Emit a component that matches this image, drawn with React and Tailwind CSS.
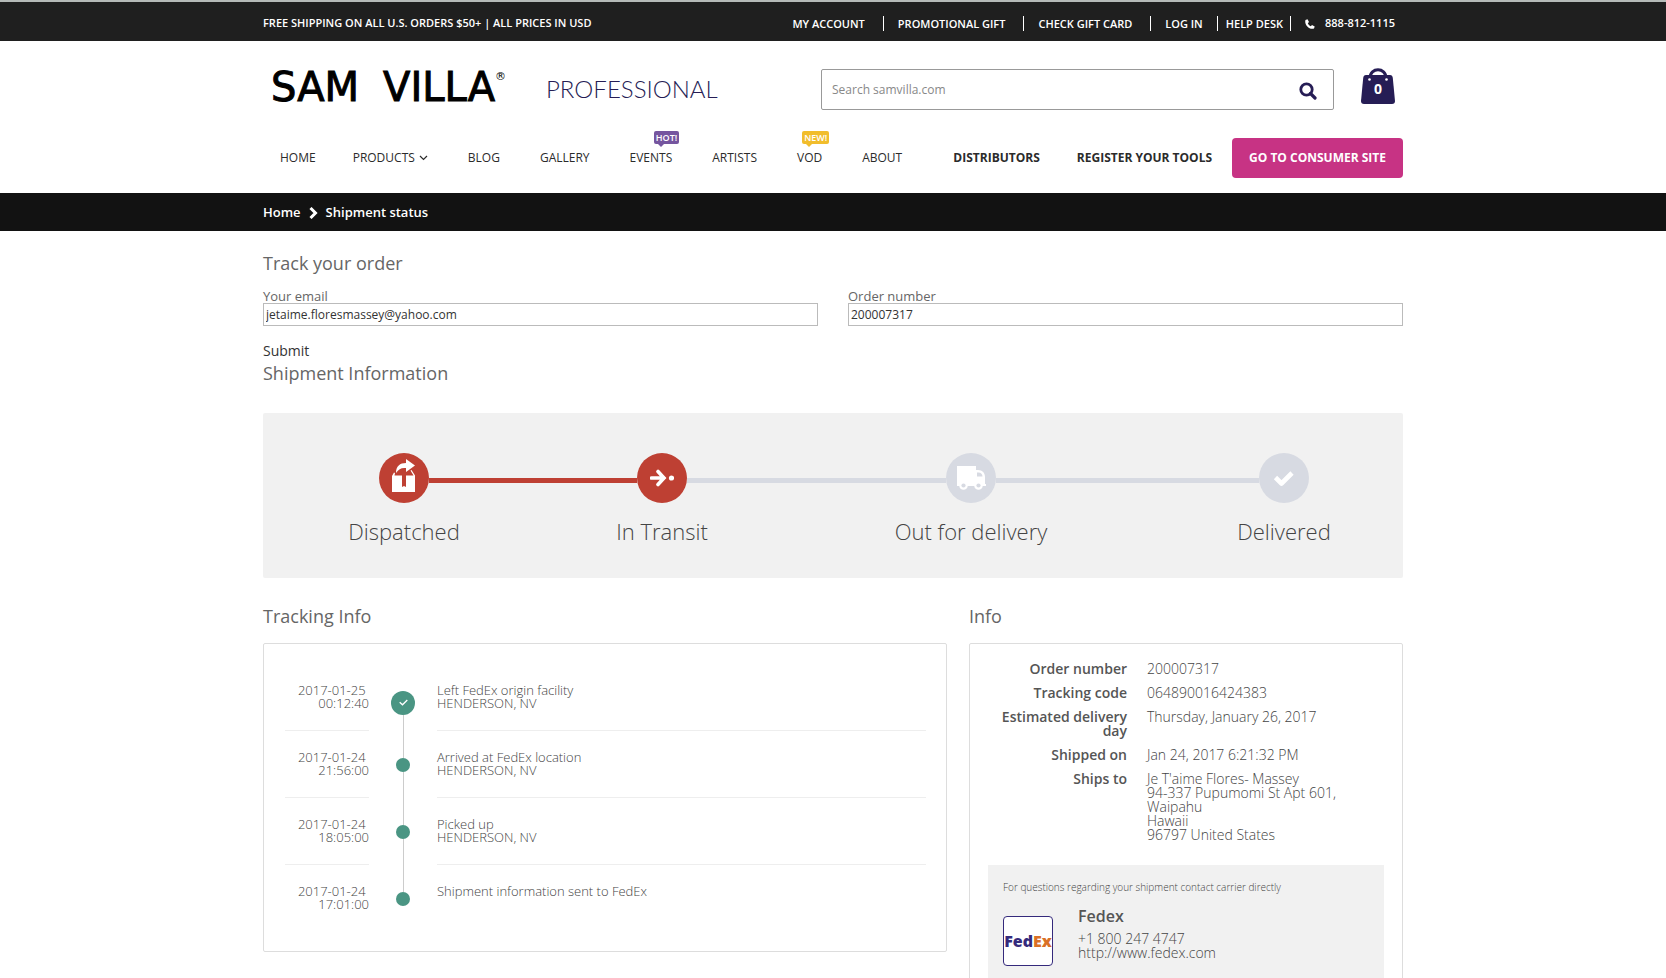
import React, { useState } from "react";

const topLinks = [
  { name: "MY ACCOUNT", style: "pr-[18px]" },
  { name: "PROMOTIONAL GIFT", style: "pl-[14px] pr-[18px] border-l" },
  { name: "CHECK GIFT CARD", style: "pl-[14px] pr-[18px] border-l" },
  { name: "LOG IN", style: "pl-[14px] pr-[14px] border-l" },
  { name: "HELP DESK", style: "pl-2 pr-[7px] border-x" },
];

const navLinks = [
  { name: "HOME" },
  { name: "PRODUCTS", arrow: true },
  { name: "BLOG" },
  { name: "GALLERY" },
  { name: "EVENTS", badge: "HOT!", color: "bg-[#75559f]", tip: "border-t-[#75559f]" },
  { name: "ARTISTS" },
  { name: "VOD", badge: "NEW!", color: "bg-[#f1bd2c]", tip: "border-t-[#f1bd2c]" },
  { name: "ABOUT" },
];

const events = [
  { date: "2017-01-25", time: "00:12:40", title: "Left FedEx origin facility", place: "HENDERSON, NV" },
  { date: "2017-01-24", time: "21:56:00", title: "Arrived at FedEx location", place: "HENDERSON, NV" },
  { date: "2017-01-24", time: "18:05:00", title: "Picked up", place: "HENDERSON, NV" },
  { date: "2017-01-24", time: "17:01:00", title: "Shipment information sent to FedEx", place: "" },
];

const details = [
  { label: "Order number", lines: ["200007317"] },
  { label: "Tracking code", lines: ["064890016424383"] },
  { label: "Estimated delivery day", lines: ["Thursday, January 26, 2017"] },
  { label: "Shipped on", lines: ["Jan 24, 2017 6:21:32 PM"] },
  {
    label: "Ships to",
    lines: ["Je T'aime Flores- Massey", "94-337 Pupumomi St Apt 601, Waipahu", "Hawaii", "96797 United States"],
  },
];

const BoxIcon = () => (
  <svg width="24" height="34" viewBox="0 0 24 34" fill="#fff" className="mb-1">
    <path d="M0 33 V17 L2 13.500 L3 14 L2.500 16.500 H10 V28 L12 27 L14 28 V16.500 H21.500 L18.500 11.500 L19.500 11 L23 16.500 V33 Z" />
    <path d="M4 14 C4 7 8 4 14 4 V0 L23 6.500 L14 13 V9 C9 8.500 7 10 4 14 Z" />
  </svg>
);

const TransitIcon = () => (
  <svg width="24" height="18" viewBox="0 0 24 18" fill="none">
    <path d="M1.500 9 H12 M8 2.500 L14 9 L8 15.500" stroke="#fff" strokeWidth="3.600" strokeLinecap="round" />
    <path d="M8 3 L16 9 L8 15 L11 9 Z" fill="#fff" />
    <circle cx="21.500" cy="9" r="2.600" fill="#fff" />
  </svg>
);

const TruckIcon = () => (
  <svg width="29" height="24" viewBox="0 0 29 24">
    <path d="M0 0 H19 V4 H21 C25.500 4 28 7 28 11 V18 H29 V20 H0 Z" fill="#fff" />
    <path d="M20 6.500 H21.500 C24 6.500 25.500 8.500 25.500 10.500 H20 Z" fill="#d7dae2" />
    <circle cx="6.500" cy="19.500" r="4.300" fill="#fff" />
    <circle cx="6.500" cy="19.500" r="2.100" fill="#d7dae2" />
    <circle cx="21.500" cy="19.500" r="4.300" fill="#fff" />
    <circle cx="21.500" cy="19.500" r="2.100" fill="#d7dae2" />
  </svg>
);

const DoneIcon = () => (
  <svg width="22" height="17" viewBox="0 0 22 17" fill="none">
    <path d="M2.500 7.500 L8.500 13.500 L19 3" stroke="#fff" strokeWidth="4.600" strokeLinejoin="round" />
  </svg>
);

const Step = ({ label, color, children }) => (
  <li className="w-[50px] shrink-0 flex flex-col items-center">
    <span className={`w-[50px] h-[50px] rounded-full flex items-center justify-center ${color}`}>
      {children}
    </span>
    <span className="mt-[11px] text-[22px] leading-[34px] font-light text-[#444] whitespace-nowrap">{label}</span>
  </li>
);

const TopBar = () => (
  <div className="border-t-2 border-[#b5bab8] bg-[#1f1f1f] text-white text-[11px] font-semibold">
    <div className="max-w-[1140px] mx-auto h-[39px] pt-1 flex items-center justify-between">
      <p>FREE SHIPPING ON ALL U.S. ORDERS $50+ | ALL PRICES IN USD</p>
      <div className="flex items-center pr-2">
        {topLinks.map((link) => (
          <a key={link.name} href="#" className={`leading-[15px] border-white ${link.style}`}>
            {link.name}
          </a>
        ))}
        <a href="#" className="pl-[14px] flex items-center gap-[10px]">
          <svg width="10" height="10" viewBox="0 0 10 10" fill="#fff">
            <path d="M.5 1 L2.500 .3 L4 3 L2.800 4.200 C3.400 5.600 4.400 6.600 5.800 7.200 L7 6 L9.700 7.500 L9 9.500 C4 11 -1 5.500 .5 1 Z" />
          </svg>
          888-812-1115
        </a>
      </div>
    </div>
  </div>
);

const Header = () => {
  const [search, setSearch] = useState("");

  return (
    <header className="max-w-[1140px] mx-auto">
      <div className="flex items-center justify-between pt-7 px-2">
        <a href="#" className="self-start flex items-start">
          <span className="w-[275px] flex items-start font-['DejaVu_Sans',sans-serif] text-black">
            <span className="flex gap-6 text-[40px] leading-9 [-webkit-text-stroke:1px]">
              <span>SAM</span>
              <span>VILLA</span>
            </span>
            <sup className="text-[11px] leading-4 top-0">®</sup>
          </span>
          <span className="font-['Lato',sans-serif] font-light text-[24px] leading-10 text-[#261d55]">
            PROFESSIONAL
          </span>
        </a>
        <div className="flex items-center gap-[27px]">
          <form className="w-[513px] h-[41px] flex items-center border border-[#999] rounded-[2px] pl-[10px] pr-4">
            <input
              type="text"
              name="search"
              aria-label="Search"
              placeholder="Search samvilla.com"
              value={search}
              onChange={(e) => setSearch(e.target.value)}
              className="flex-1 text-[12px] outline-none placeholder:text-[#888]"
            />
            <button type="button" aria-label="Search" className="pt-[2px]">
              <svg width="18" height="18" viewBox="0 0 18 18" fill="none" stroke="#261d55">
                <circle cx="7.500" cy="7.500" r="5.700" strokeWidth="2.800" />
                <path d="M11.500 11.500 L16 16" strokeWidth="3.200" strokeLinecap="round" />
              </svg>
            </button>
          </form>
          <a href="#" aria-label="Cart" className="relative -mt-2">
            <svg width="34" height="36" viewBox="0 0 34 36">
              <path d="M9 10 C9 -1 25 -1 25 10" fill="none" stroke="#261d55" strokeWidth="3" />
              <path d="M5 7 H29 Q31.500 7 31.800 10 L34 33 Q34 36 31 36 H3 Q0 36 0 33 L2.200 10 Q2.500 7 5 7 Z" fill="#261d55" />
              <circle cx="8.500" cy="11.500" r="1.300" fill="#fff" />
              <circle cx="25.500" cy="11.500" r="1.300" fill="#fff" />
            </svg>
            <span className="absolute inset-x-0 top-3 text-center text-[14px] leading-[18px] font-bold text-white">0</span>
          </a>
        </div>
      </div>
      <nav className="mt-7 pb-[15px] pl-[17px] flex items-center justify-between text-[12px] text-[#2b2b2b]">
        <ul className="flex items-center gap-10">
          {navLinks.map((link) => (
            <li key={link.name} className="relative first:-mr-[3px]">
              <a href="#" className="flex items-center gap-1">
                {link.name}
                {link.arrow && (
                  <svg width="9" height="6" viewBox="0 0 9 6" fill="none" stroke="#2b2b2b" strokeWidth="1.200">
                    <path d="M1 1 L4.500 4.500 L8 1" />
                  </svg>
                )}
              </a>
              {link.badge && (
                <span
                  className={`absolute -top-[18px] -right-[7px] px-[2px] rounded-[2px] text-[9px] leading-[13px] font-semibold text-white ${link.color}`}
                >
                  {link.badge}
                  <span className={`absolute left-1 top-full border-x-[3px] border-t-[3px] border-x-transparent ${link.tip}`} />
                </span>
              )}
            </li>
          ))}
        </ul>
        <div className="flex items-center font-bold">
          <a href="#" className="mr-[37px]">DISTRIBUTORS</a>
          <a href="#" className="mr-5">REGISTER YOUR TOOLS</a>
          <button className="h-10 px-[17px] rounded-[4px] bg-[#c73384] text-white font-bold">GO TO CONSUMER SITE</button>
        </div>
      </nav>
    </header>
  );
};

const TrackForm = () => {
  const [order, setOrder] = useState({
    email: "jetaime.floresmassey@yahoo.com",
    number: "200007317",
  });

  const handleChange = (e) => {
    setOrder({ ...order, [e.target.name]: e.target.value });
  };

  return (
    <form className="pt-5" onSubmit={(e) => e.preventDefault()}>
      <h2 className="text-[18px] leading-6">Track your order</h2>
      <div className="mt-[14px] grid grid-cols-2 gap-[30px]">
        <div>
          <label htmlFor="email" className="block text-[13px] leading-[14px]">
            Your email
          </label>
          <input
            id="email"
            type="email"
            name="email"
            value={order.email}
            onChange={handleChange}
            className="block w-full h-[23px] px-[2px] border border-[#bbb] text-[12px] text-[#333]"
          />
        </div>
        <div>
          <label htmlFor="number" className="block text-[13px] leading-[14px]">
            Order number
          </label>
          <input
            id="number"
            type="text"
            name="number"
            value={order.number}
            onChange={handleChange}
            className="block w-full h-[23px] px-[2px] border border-[#bbb] text-[12px] text-[#333]"
          />
        </div>
      </div>
      <button type="submit" className="block mt-[15px] text-[14px] leading-5 text-[#333]">
        Submit
      </button>
    </form>
  );
};

const Timeline = () => (
  <section>
    <h2 className="text-[18px] leading-6">Tracking Info</h2>
    <div className="mt-[15px] border border-[#ddd] rounded-[2px] pl-[21px] pr-5 pt-5 pb-[19px] text-[13px] leading-[13px] font-light text-[#444]">
      {events.map((event, i) => (
        <div key={event.time} className="flex h-[67px]">
          <div className={`w-[84px] pt-5 text-right border-[#eee] ${i < events.length - 1 ? "border-b" : ""}`}>
            {event.date}
            {"\u00a0"}
            <br />
            {event.time}
          </div>
          <div className={`w-[68px] flex flex-col items-center ${i === 0 ? "pt-[10px]" : ""}`}>
            <span className={`w-px flex-1 ${i > 0 ? "bg-[#ccc]" : ""}`} />
            {i === 0 ? (
              <span className="w-6 h-6 rounded-full bg-[#4a9583] flex items-center justify-center">
                <svg width="9" height="7" viewBox="0 0 9 7" fill="none" stroke="#fff" strokeWidth="1.300">
                  <path d="M.7 3.200 L3.500 5.800 L8.300 1" />
                </svg>
              </span>
            ) : (
              <span className="w-[14px] h-[14px] rounded-full bg-[#4a9583]" />
            )}
            <span className={`w-px flex-1 ${i < events.length - 1 ? "bg-[#ccc]" : ""}`} />
          </div>
          <div className={`flex-1 pt-5 border-[#eee] ${i < events.length - 1 ? "border-b" : ""}`}>
            {event.title}
            <br />
            {event.place}
          </div>
        </div>
      ))}
    </div>
  </section>
);

const Info = () => (
  <section>
    <h2 className="text-[18px] leading-6">Info</h2>
    <div className="mt-[15px] border border-[#ddd] rounded-[2px] px-[18px] pt-[18px] pb-5 text-[14px] leading-[14px] text-[#444]">
      <dl className="flex flex-col gap-[10px]">
        {details.map((row) => (
          <div key={row.label} className="flex gap-5">
            <dt className="w-[139px] pl-3 shrink-0 text-right font-semibold text-[#555]">{row.label}</dt>
            <dd className="font-light pr-10">
              {row.lines.map((line) => (
                <p key={line}>{line}</p>
              ))}
            </dd>
          </div>
        ))}
      </dl>
      <div className="mt-[23px] bg-[#f1f1f1] px-[15px] pt-4 pb-6">
        <p className="text-[10px] leading-3 font-light">For questions regarding your shipment contact carrier directly</p>
        <div className="mt-[15px] flex gap-[25px]">
          <div className="w-[50px] h-[50px] mt-2 flex items-center justify-center rounded-[4px] border border-[#352a7c] bg-white font-['Open_Sans',sans-serif] text-[16px] font-extrabold">
            <span className="text-[#352a7c]">Fed</span>
            <span className="text-[#da7127]">Ex</span>
          </div>
          <div className="font-light">
            <h3 className="text-[16px] leading-4 font-semibold text-[#555]">Fedex</h3>
            <p className="mt-2">+1 800 247 4747</p>
            <a href="http://www.fedex.com">http://www.fedex.com</a>
          </div>
        </div>
      </div>
    </div>
  </section>
);

const App = () => {
  return (
    <div className="bg-white font-['Open_Sans',sans-serif] text-[#666]">
      <TopBar />
      <Header />
      <div className="bg-[#121212] text-white text-[13px] font-semibold">
        <div className="max-w-[1140px] mx-auto h-[38px] pt-[2px] flex items-center gap-2">
          <a href="#">Home</a>
          <svg width="9" height="12" viewBox="0 0 9 12" fill="none" stroke="#fff" strokeWidth="3">
            <path d="M1.500 1 L6.500 6 L1.500 11" />
          </svg>
          <span>Shipment status</span>
        </div>
      </div>
      <main className="max-w-[1140px] mx-auto">
        <TrackForm />
        <h2 className="text-[18px] leading-6">Shipment Information</h2>
        <ol className="mt-7 h-[165px] pt-10 pl-[116px] pr-[94px] flex items-start bg-[#f1f1f1] rounded-[2px]">
          <Step label="Dispatched" color="bg-[#be4033]">
            <BoxIcon />
          </Step>
          <li aria-hidden="true" className="grow-[208] basis-0 h-[5px] mt-[25px] bg-[#be4033]" />
          <Step label="In Transit" color="bg-[#be4033]">
            <TransitIcon />
          </Step>
          <li aria-hidden="true" className="grow-[259] basis-0 h-[5px] mt-[25px] bg-[#d7dae2]" />
          <Step label="Out for delivery" color="bg-[#d7dae2]">
            <TruckIcon />
          </Step>
          <li aria-hidden="true" className="grow-[263] basis-0 h-[5px] mt-[25px] bg-[#d7dae2]" />
          <Step label="Delivered" color="bg-[#d7dae2]">
            <DoneIcon />
          </Step>
        </ol>
        <div className="mt-[26px] grid grid-cols-[684fr_434fr] items-start gap-[22px]">
          <Timeline />
          <Info />
        </div>
      </main>
    </div>
  );
};

export default App;
